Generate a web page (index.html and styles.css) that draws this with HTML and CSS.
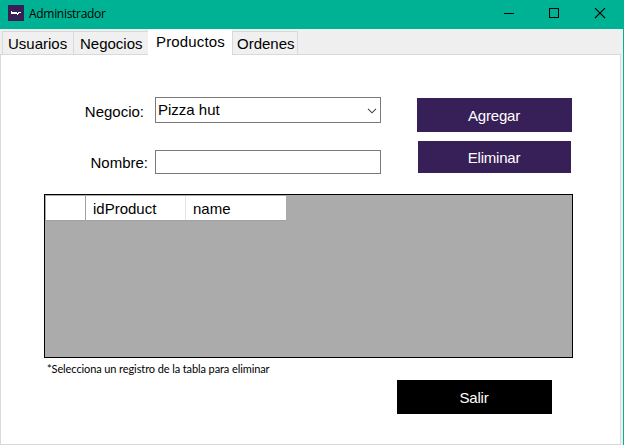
FILE: index.html
```html
<!DOCTYPE html>
<html lang="es">
<head>
<meta charset="utf-8">
<title>Administrador</title>
<link rel="stylesheet" href="styles.css">
</head>
<body>
<div class="window">
  <header class="titlebar">
    <svg class="app-icon" width="16" height="16" viewBox="0 0 16 16" shape-rendering="crispEdges"><rect width="16" height="16" fill="#371f57"/><path d="M3 6h1v1h5v1h1v-1h3v1h-2v1h-1v1h-1v-1h-6z" fill="#fff"/></svg>
    <span class="title">Administrador</span>
    <svg class="controls" width="112" height="28" viewBox="0 0 112 28" fill="none" stroke="#000"><path d="M0 13.5h10M45.500 8.500h9v9h-9z" shape-rendering="crispEdges"/><path d="M91 8.200l10 9.800M101 8.200l-10 9.800" stroke-width="1.1"/></svg>
  </header>
  <nav class="tabs">
    <div class="tab usuarios"><span>Usuarios</span></div>
    <div class="tab negocios"><span>Negocios</span></div>
    <div class="tab productos active"><span>Productos</span></div>
    <div class="tab ordenes"><span>Ordenes</span></div>
  </nav>
  <main class="pane">
    <section class="top">
      <div class="fields">
        <div class="field business"><label>Negocio:</label><div class="combo"><span>Pizza hut</span><svg width="10" height="6" viewBox="0 0 10 6" fill="none" stroke="#444" stroke-width="1.1"><path d="M1 .8l4 4 4-4"/></svg></div></div>
        <div class="field name"><label>Nombre:</label><div class="input"></div></div>
      </div>
      <div class="actions">
        <div class="button add"><span>Agregar</span></div>
        <div class="button delete"><span>Eliminar</span></div>
      </div>
    </section>
    <section class="table">
      <div class="row"><div class="cell corner"></div><div class="cell id">idProduct</div><div class="cell pname">name</div></div>
    </section>
    <p class="hint">*Selecciona un registro de la tabla para eliminar</p>
    <div class="button exit"><span>Salir</span></div>
  </main>
</div>
</body>
</html>
```
FILE: styles.css
```css
* { box-sizing: border-box; }
body { margin: 0; font: 15px/18px "Liberation Sans", Arial, sans-serif; color: #000; }
.window { width: 624px; height: 445px; overflow: hidden; background: #efefef; border-right: 1px solid #00b294; display: flex; flex-direction: column; }
.titlebar { height: 29px; flex: none; background: #00b294; display: flex; align-items: flex-start; padding-left: 8px; }
.app-icon { margin-top: 5px; }
.title { margin: 5px 0 0 5px; font: 12px/17px "Open Sans", "Noto Sans", sans-serif; letter-spacing: -0.3px; }
.controls { margin-left: auto; margin-right: 7px; }
.tabs { height: 25px; flex: none; display: flex; align-items: flex-end; padding-left: 2px; }
.tab { height: 23px; border: 1px solid #d9d9d9; border-right: 0; border-bottom: 0; padding: 3px 0 0 5px; white-space: nowrap; background: #f0f0f0; }
.usuarios { width: 71px; }
.negocios { width: 75px; padding-left: 6px; }
.productos { width: 84px; padding-left: 7px; letter-spacing: 0.15px; }
.ordenes { width: 66px; padding-left: 4px; border-right: 1px solid #d9d9d9; }
.tab.active { height: 26px; margin-bottom: -1px; border-color: #fff; background: #fff; padding-top: 3px; position: relative; }
.pane { width: 621px; height: 391px; border: 1px solid #d9d9d9; background: #fff; padding: 42px 47px 0 43px; }
.top { height: 97px; display: flex; justify-content: space-between; }
.fields { width: 337px; }
.field { display: flex; justify-content: flex-end; }
.field label { white-space: nowrap; padding-top: 6px; }
.business { height: 53px; }
.business label { margin-right: 11px; }
.name label { margin-right: 7px; padding-top: 4px; }
.combo, .input { width: 226px; height: 26px; border: 1px solid #7a7a7a; background: #fff; }
.combo { display: flex; justify-content: space-between; padding: 3px 3px 0 2px; }
.combo svg { margin-top: 7px; }
.input { height: 24px; }
.actions { width: 155px; padding-top: 1px; margin-right: 1px; }
.button { display: flex; justify-content: center; align-items: center; color: #fff; background: #371f57; padding: 2px 1px 0 0; letter-spacing: -0.2px; }
.add { width: 155px; height: 34px; }
.delete { width: 153px; height: 32px; margin: 9px 0 0 1px; }
.table { width: 529px; height: 164px; border: 1px solid #000; background: #ababab; padding: 1px; }
.row { display: flex; width: 240px; height: 25px; border-bottom: 1px solid #a0a0a0; background: #fff; }
.cell { width: 100px; padding: 4px 0 0 7px; }
.corner { width: 40px; border-right: 1px solid #a0a0a0; }
.id { border-right: 1px solid #e5e5e5; }
.hint { margin: 2px 0 0 3px; height: 20px; font: 11px/17px Lato, "Open Sans", sans-serif; letter-spacing: -0.1px; white-space: nowrap; }
.exit { width: 155px; height: 34px; margin-left: 353px; background: #000; }
```
